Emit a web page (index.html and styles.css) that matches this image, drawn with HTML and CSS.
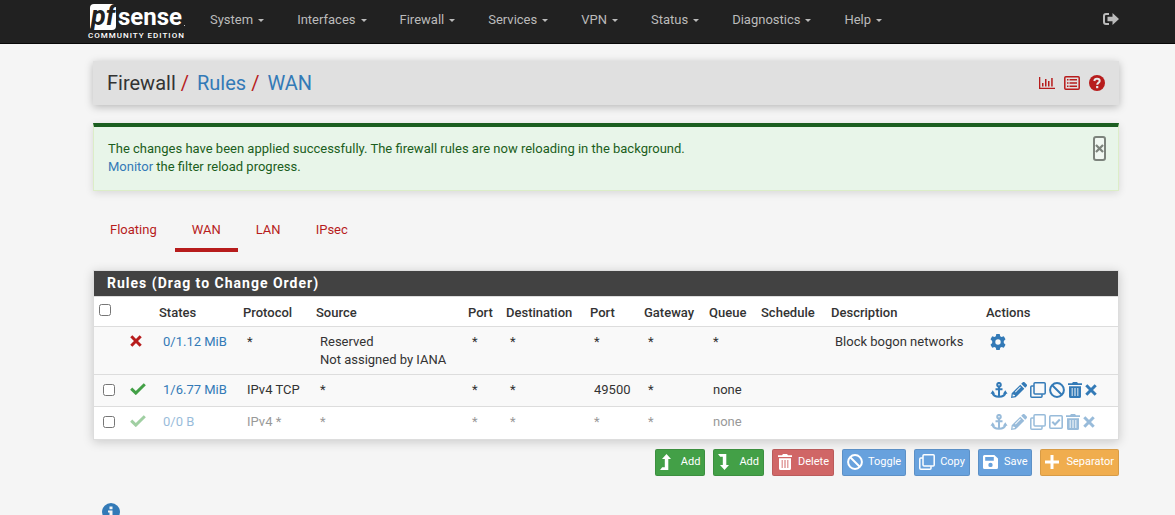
FILE: index.html
```html
<!DOCTYPE html>
<html lang="en">
<head>
<meta charset="utf-8">
<meta name="viewport" content="width=device-width, initial-scale=1">
<title>Firewall: Rules: WAN</title>
<link rel="stylesheet" href="styles.css">
</head>
<body>
<svg class="sprite" aria-hidden="true">
  <symbol id="anchor" viewBox="0 0 17 16"><g fill="none" stroke="currentColor" stroke-width="2"><circle cx="8.500" cy="2.700" r="1.800"/><path d="M8.500 4.500V15M5 7.200h7M2 10.500c.5 3 3 4.300 6.500 4.300s6-1.300 6.500-4.300"/></g><path fill="currentColor" d="M0 11.800 2.200 8.300 4.600 11.800zM12.400 11.800l2.400-3.500 2.200 3.500z"/></symbol>
  <symbol id="pencil" viewBox="0 0 16 16"><path fill="currentColor" fill-rule="evenodd" d="M9.300 2.700l4 4-8.600 8.600L0 16l.7-4.700zM1.900 12l-.4 2.500 2.500-.4-.2-1.200-1.300-.2zM9.200 4.600 4 9.800l.6.600 5.200-5.200zM10.200 1.800l1.300-1.300a1.600 1.600 0 0 1 2.300 0l1.700 1.700a1.600 1.600 0 0 1 0 2.300l-1.300 1.300z"/></symbol>
  <symbol id="clone" viewBox="0 0 16 16"><g fill="none" stroke="currentColor" stroke-width="1.500"><rect x="4" y=".8" width="11.200" height="11.200" rx="1"/><path d="M3.800 4H1.800a1 1 0 0 0-1 1v9.200a1 1 0 0 0 1 1H11a1 1 0 0 0 1-1v-2"/></g></symbol>
  <symbol id="ban" viewBox="0 0 16 16"><g fill="none" stroke="currentColor" stroke-width="2"><circle cx="8" cy="8" r="6.900"/><path d="M3 3l10 10"/></g></symbol>
  <symbol id="trash" viewBox="0 0 14 16"><path fill="currentColor" fill-rule="evenodd" d="M0 1.200h4L5 0h4l1 1.200h4v1.900H0zM1 4.200h12V14.500A1.500 1.500 0 0 1 11.500 16h-9A1.500 1.500 0 0 1 1 14.500zM3.700 6v8h.9V6zM6.500 6v8h1V6zM9.400 6v8h.9V6z"/></symbol>
  <symbol id="times" viewBox="0 0 12 12"><path fill="none" stroke="currentColor" stroke-width="3" d="M1.300 1.300l9.400 9.400M10.700 1.300l-9.400 9.400"/></symbol>
  <symbol id="check" viewBox="0 0 16 12"><path fill="none" stroke="currentColor" stroke-width="3" d="M1.200 5.700l4.600 4.400 9-8.800"/></symbol>
  <symbol id="checkbox" viewBox="0 0 14 16"><g fill="none" stroke="currentColor" stroke-width="1.600"><rect x=".8" y="1.800" width="12.400" height="12.400" rx="1"/><path stroke-width="2" d="M3.300 7.800l2.700 2.700 4.800-5"/></g></symbol>
  <symbol id="gear" viewBox="0 0 16 16"><path fill="currentColor" fill-rule="evenodd" d="M6.300 0h3.400l.5 2.300 1.300.8 2.300-.8 1.700 3-1.700 1.600v2.200l1.700 1.600-1.700 3-2.300-.8-1.300.8-.5 2.300H6.300l-.5-2.300-1.300-.8-2.300.8-1.700-3 1.700-1.600V6.900L.5 5.300l1.700-3 2.300.8 1.300-.8zM8 5.300a2.700 2.700 0 1 0 0 5.400 2.700 2.700 0 0 0 0-5.400z"/></symbol>
  <symbol id="up" viewBox="0 0 16 16"><path fill="currentColor" d="M6.500 0l4.500 5H8.300v11H0l2.200-2.700h2.600V5H2z"/></symbol>
  <symbol id="down" viewBox="0 0 16 16"><path fill="currentColor" d="M6.500 16 11 11H8.300V0H0l2.200 2.700h2.600V11H2z"/></symbol>
  <symbol id="save" viewBox="0 0 16 16"><path fill="currentColor" fill-rule="evenodd" d="M1.500 1h9.800L15 4.500v9a1.500 1.500 0 0 1-1.500 1.500h-12A1.500 1.500 0 0 1 0 13.500v-11A1.500 1.500 0 0 1 1.500 1zM2.200 3v3.800h8.600V3zM7.500 8.700a2.200 2.200 0 1 0 0 4.400 2.200 2.200 0 0 0 0-4.400z"/></symbol>
  <symbol id="plus" viewBox="0 0 16 16"><path fill="currentColor" d="M5.500 1h3v5.500H14v3H8.500V15h-3V9.500H0v-3h5.500z"/></symbol>
  <symbol id="chart" viewBox="0 0 16 14"><path fill="currentColor" d="M0 1h1.300v10.700H16V13H0zM3 7h1.500v3.500H3zM6 3h1.500v7.500H6zM9 5h1.500v5.500H9zM12.200 2h1.500v8.500h-1.500z"/></symbol>
  <symbol id="list" viewBox="0 0 16 14"><rect x=".8" y=".8" width="14.400" height="12.400" rx="1" fill="none" stroke="currentColor" stroke-width="1.500"/><path fill="currentColor" d="M3 3h1.500v1.500H3zM5.500 3H13v1.500H5.500zM3 6.200h1.500v1.500H3zM5.500 6.200H13v1.500H5.500zM3 9.500h1.500V11H3zM5.500 9.500H13V11H5.500z"/></symbol>
  <symbol id="help" viewBox="0 0 16 16"><circle cx="8" cy="8" r="8" fill="currentColor"/><path fill="none" stroke="#e8e8e8" stroke-width="2" d="M5.300 6C5.500 4.500 6.500 3.700 8 3.700c1.600 0 2.700.9 2.700 2.200 0 1.800-2.500 1.700-2.500 3.900"/><path fill="#e8e8e8" d="M7.100 11h2.200v2.200H7.100z"/></symbol>
  <symbol id="info" viewBox="0 0 18 18"><circle cx="9" cy="9" r="9" fill="currentColor"/><path fill="#f5f5f5" d="M7.500 3.500h3v2.700h-3zM6 7.500h4.500v5.300H12v2H6v-2h1.500V9.500H6z"/></symbol>
  <symbol id="logout" viewBox="0 0 16 12"><path fill="none" stroke="currentColor" stroke-width="2" d="M6 1H3a2 2 0 0 0-2 2v6a2 2 0 0 0 2 2h3"/><path fill="currentColor" d="M4.500 3.800h5V0L16 6l-6.500 6V8.200h-5z"/></symbol>
</svg>

<header class="navbar">
  <a class="brand" href="#" aria-label="pfSense Community Edition">
    <span class="wordmark"><span class="pf">pf</span><span class="sense">sense</span></span>
    <span class="edition">COMMUNITY EDITION</span>
  </a>
  <nav class="menu">
    <a href="#">System</a><a href="#">Interfaces</a><a href="#">Firewall</a><a href="#">Services</a><a href="#">VPN</a><a href="#">Status</a><a href="#">Diagnostics</a><a href="#">Help</a>
  </nav>
  <a class="logout" href="#" aria-label="Logout"><svg width="16" height="12"><use href="#logout"/></svg></a>
</header>

<main class="page">
  <div class="heading">
    <h1 class="crumbs"><span>Firewall</span><i>/</i><a href="#">Rules</a><i>/</i><a href="#">WAN</a></h1>
    <div class="shortcuts">
      <a href="#" aria-label="Monitoring"><svg width="16" height="14"><use href="#chart"/></svg></a>
      <a href="#" aria-label="Logs"><svg width="16" height="14"><use href="#list"/></svg></a>
      <a href="#" aria-label="Help page"><svg width="16" height="16"><use href="#help"/></svg></a>
    </div>
  </div>

  <div class="alert" role="status">
    <p>The changes have been applied successfully. The firewall rules are now reloading in the background.<br><a href="#">Monitor</a> the filter reload progress.</p>
    <button class="close" type="button" aria-label="Close"><svg width="9" height="9"><use href="#times"/></svg></button>
  </div>

  <nav class="tabs">
    <a href="#">Floating</a><a class="active" href="#">WAN</a><a href="#">LAN</a><a href="#">IPsec</a>
  </nav>

  <section class="panel">
    <h2>Rules (Drag to Change Order)</h2>
    <table>
      <colgroup><col class="c-pick"><col class="c-icon"><col class="c-states"><col class="c-proto"><col class="c-source"><col class="c-port"><col class="c-dest"><col class="c-dport"><col class="c-gateway"><col class="c-queue"><col class="c-schedule"><col class="c-desc"><col class="c-actions"></colgroup>
      <thead>
        <tr><th><input type="checkbox" aria-label="Select all"></th><th></th><th>States</th><th>Protocol</th><th>Source</th><th>Port</th><th>Destination</th><th>Port</th><th>Gateway</th><th>Queue</th><th>Schedule</th><th>Description</th><th>Actions</th></tr>
      </thead>
      <tbody>
        <tr class="odd"><td></td><td class="block"><svg width="12" height="12"><use href="#times"/></svg></td><td><a href="#">0/1.12 MiB</a></td><td>*</td><td>Reserved<br>Not assigned by IANA</td><td>*</td><td>*</td><td>*</td><td>*</td><td>*</td><td></td><td>Block bogon networks</td>
          <td><div class="actions"><a href="#" aria-label="Settings"><svg width="16" height="16"><use href="#gear"/></svg></a></div></td></tr>
        <tr class="odd"><td><input type="checkbox" aria-label="Select rule 1"></td><td class="pass"><svg width="16" height="12"><use href="#check"/></svg></td><td><a href="#">1/6.77 MiB</a></td><td>IPv4 TCP</td><td>*</td><td>*</td><td>*</td><td>49500</td><td>*</td><td>none</td><td></td><td></td>
          <td><div class="actions"><a href="#" aria-label="Move"><svg width="18" height="16"><use href="#anchor"/></svg></a><a href="#" aria-label="Edit"><svg width="16" height="16"><use href="#pencil"/></svg></a><a href="#" aria-label="Copy"><svg width="16" height="16"><use href="#clone"/></svg></a><a href="#" aria-label="Disable"><svg width="16" height="16"><use href="#ban"/></svg></a><a href="#" aria-label="Delete"><svg width="14" height="16"><use href="#trash"/></svg></a><a href="#" aria-label="Kill states"><svg width="12" height="12"><use href="#times"/></svg></a></div></td></tr>
        <tr class="disabled"><td><input type="checkbox" aria-label="Select rule 2"></td><td class="pass"><svg width="16" height="12"><use href="#check"/></svg></td><td><a href="#">0/0 B</a></td><td>IPv4 *</td><td>*</td><td>*</td><td>*</td><td>*</td><td>*</td><td>none</td><td></td><td></td>
          <td><div class="actions"><a href="#" aria-label="Move"><svg width="18" height="16"><use href="#anchor"/></svg></a><a href="#" aria-label="Edit"><svg width="16" height="16"><use href="#pencil"/></svg></a><a href="#" aria-label="Copy"><svg width="16" height="16"><use href="#clone"/></svg></a><a href="#" aria-label="Enable"><svg width="14" height="16"><use href="#checkbox"/></svg></a><a href="#" aria-label="Delete"><svg width="14" height="16"><use href="#trash"/></svg></a><a href="#" aria-label="Kill states"><svg width="12" height="12"><use href="#times"/></svg></a></div></td></tr>
      </tbody>
    </table>
  </section>

  <div class="buttons">
    <button class="btn green" type="button"><svg width="16" height="16"><use href="#up"/></svg>Add</button>
    <button class="btn green" type="button"><svg width="16" height="16"><use href="#down"/></svg>Add</button>
    <button class="btn red" type="button"><svg width="16" height="16"><use href="#trash"/></svg>Delete</button>
    <button class="btn blue" type="button"><svg width="16" height="16"><use href="#ban"/></svg>Toggle</button>
    <button class="btn blue" type="button"><svg width="16" height="16"><use href="#clone"/></svg>Copy</button>
    <button class="btn blue" type="button"><svg width="16" height="16"><use href="#save"/></svg>Save</button>
    <button class="btn orange" type="button"><svg width="16" height="16"><use href="#plus"/></svg>Separator</button>
  </div>

  <a class="info" href="#" aria-label="Information"><svg width="18" height="18"><use href="#info"/></svg></a>
</main>
</body>
</html>
```
FILE: styles.css
```css
* { box-sizing: border-box; }

html { scrollbar-width: none; }

body {
  margin: 0;
  background: #f5f5f5;
  color: #333;
  font: 13px/18px Roboto, "Liberation Sans", sans-serif;
}

a { color: #337ab7; text-decoration: none; }
svg { display: block; flex: none; }
.sprite { position: absolute; width: 0; height: 0; }

/* Top bar */
.navbar {
  display: flex;
  align-items: flex-start;
  height: 44px;
  padding: 0 56px 0 88px;
  background: #212121;
  border-bottom: 1px solid #080808;
}
.brand {
  display: flex;
  flex-direction: column;
  width: 122px;
  padding-top: 4px;
  color: #fff;
}
.wordmark { display: flex; align-items: flex-end; gap: 2px; padding-left: 2px; }
.wordmark::after {
  content: "";
  width: 1px;
  height: 1px;
  margin-bottom: 4px;
  background: #bbb;
}
.pf {
  width: 26px;
  height: 26px;
  border-radius: 4px;
  background: #fff;
  color: #212121;
  font-size: 27px;
  font-style: italic;
  font-weight: 700;
  line-height: 25px;
  text-align: center;
}
.sense { font-size: 24px; font-weight: 700; line-height: 26px; }
.edition {
  font-size: 8px;
  font-weight: 500;
  line-height: 12px;
  letter-spacing: 1px;
  white-space: nowrap;
}
.menu { display: flex; flex: 1; gap: 33px; padding-top: 11px; }
.menu a { display: flex; align-items: center; gap: 5px; color: #bbb; }
.menu a::after {
  content: "";
  border: 3px solid transparent;
  border-top-color: currentColor;
  border-bottom: 0;
}
.logout { padding-top: 13px; color: #bbb; }

.page { padding: 17px 56px 0 93px; }

/* Breadcrumb */
.heading {
  display: flex;
  align-items: center;
  justify-content: space-between;
  height: 44px;
  padding: 0 14px;
  background: #e0e0e0;
  box-shadow: 0 2px 8px rgba(0, 0, 0, .25);
}
.crumbs { display: flex; margin: 0; font-size: 20px; font-weight: 400; line-height: 24px; }
.crumbs i { padding: 0 8px 0 5px; color: #b71c1c; font-style: normal; }
.shortcuts { display: flex; align-items: center; gap: 9px; }
.shortcuts a { color: #b71c1c; }

/* Message */
.alert {
  display: flex;
  align-items: flex-start;
  justify-content: space-between;
  margin-top: 18px;
  padding: 13px 12px 14px 14px;
  background: #e8f5e9;
  border: 1px solid #dcedc8;
  border-top: 4px solid #1b5e20;
  box-shadow: 0 2px 8px rgba(0, 0, 0, .12);
  color: #1b5e20;
}
.alert p { margin: 0; }
.close {
  display: flex;
  align-items: center;
  justify-content: center;
  width: 13px;
  height: 25px;
  margin: -4px 0 0;
  padding: 0;
  background: #f1f8f2;
  border: 2px solid #7c837c;
  border-radius: 3px;
  color: #7c837c;
}

/* Tabs */
.tabs { display: flex; gap: 1px; margin-top: 18px; }
.tabs a { padding: 12px 17px 9px; border-bottom: 4px solid transparent; color: #b71c1c; }
.tabs .active { border-bottom-color: #b71c1c; }

/* Rules */
.panel {
  margin-top: 18px;
  background: #fff;
  border: 1px solid #ddd;
  box-shadow: 0 2px 10px rgba(0, 0, 0, .18);
}
.panel h2 {
  margin: 0;
  padding: 3px 13px 4px;
  background: #424242;
  color: #fff;
  font-size: 14px;
  font-weight: 700;
  letter-spacing: 1px;
  line-height: 18px;
}
table { width: 100%; border-collapse: collapse; table-layout: fixed; }
th, td { border-top: 1px solid #ddd; text-align: left; vertical-align: top; white-space: nowrap; }
th { height: 30px; padding: 7px 0 4px 5px; font-weight: 500; }
td { height: 32px; padding: 6px 0 5px 9px; }
.odd td { background: #f9f9f9; }
.c-pick { width: 27px; }
.c-icon { width: 33px; }
.c-states { width: 84px; }
.c-proto { width: 73px; }
.c-source { width: 152px; }
.c-port { width: 38px; }
.c-dest { width: 84px; }
.c-dport { width: 54px; }
.c-gateway { width: 65px; }
.c-queue { width: 52px; }
.c-schedule { width: 70px; }
.c-desc { width: 155px; }
.c-actions { width: 137px; }
th input, td input { display: block; width: 12px; height: 12px; margin: 0; }
td input { margin-top: 3px; }
td > svg { margin-top: 2px; }
.block { color: #b71c1c; }
.pass { color: #43a047; }
.actions { display: flex; align-items: center; gap: 3px; height: 18px; }
.disabled td { color: #999; }
.disabled td > a, .disabled td > svg, .disabled .actions { opacity: .5; }
.disabled .pass { color: #43a047; }

/* Buttons */
.buttons { display: flex; justify-content: flex-end; gap: 8px; margin-top: 9px; }
.btn {
  display: flex;
  align-items: center;
  gap: 5px;
  height: 27px;
  padding: 0 4px;
  border: 1px solid rgba(0, 0, 0, .1);
  border-radius: 2px;
  color: #fff;
  font: 11px/16px Roboto, "Liberation Sans", sans-serif;
}
.green { background: #43a047; }
.red { background: #d06666; }
.blue { background: #67a1dd; }
.orange { background: #f0ad4e; }

.info { display: block; width: 18px; margin: 27px 0 20px 9px; }
```
